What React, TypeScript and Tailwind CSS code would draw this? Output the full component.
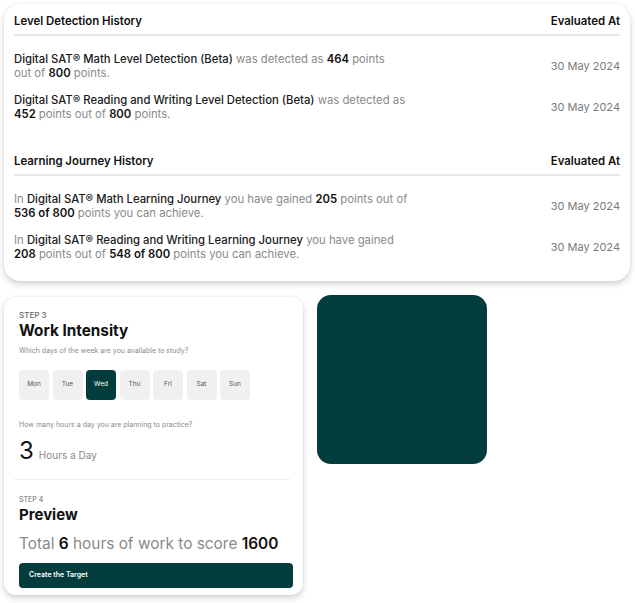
import React from "react";

const B = ({ children }: { children: React.ReactNode }) => (
  <span className="font-medium text-[#1a1a1a]">{children}</span>
);
const N = ({ children }: { children: React.ReactNode }) => (
  <span className="font-semibold text-[#111]">{children}</span>
);

function Row({ l1, l2 }: { l1: React.ReactNode; l2: React.ReactNode }) {
  return (
    <div className="flex items-center justify-between">
      <div className="text-[11.3px] leading-[14px] text-[#8a8a8a]">
        <div className="whitespace-nowrap">{l1}</div>
        <div className="whitespace-nowrap">{l2}</div>
      </div>
      <span className="text-[11px] text-[#7a7a7a]">30 May 2024</span>
    </div>
  );
}

function Section({ title, children }: { title: string; children: React.ReactNode }) {
  return (
    <div>
      <div className="flex items-center justify-between border-b-2 border-[#e8e8e8] pb-[5px] text-[11.4px] leading-[16px] font-semibold text-[#111]">
        <span>{title}</span>
        <span>Evaluated At</span>
      </div>
      <div className="mt-[16px] flex flex-col gap-[13px]">{children}</div>
    </div>
  );
}

export default function App() {
  const days = ["Mon", "Tue", "Wed", "Thu", "Fri", "Sat", "Sun"];
  return (
    <div className="min-h-[603px] bg-white" style={{ fontFamily: "Inter, 'Noto Sans', sans-serif" }}>
      <div className="pt-[4px] pl-[4px]">
        <div className="w-[626px] rounded-[16px] bg-white px-[10px] pt-[9px] pb-[20px] shadow-[0_3px_6px_rgba(0,0,0,0.18),0_0_2px_rgba(0,0,0,0.08)]">
          <Section title="Level Detection History">
            <Row
              l1={<><B>Digital SAT® Math Level Detection (Beta)</B> was detected as <N>464</N> points</>}
              l2={<>out of <N>800</N> points.</>}
            />
            <Row
              l1={<><B>Digital SAT® Reading and Writing Level Detection (Beta)</B> was detected as</>}
              l2={<><N>452</N> points out of <N>800</N> points.</>}
            />
          </Section>
          <div className="mt-[32px]">
            <Section title="Learning Journey History">
              <Row
                l1={<>In <B>Digital SAT® Math Learning Journey</B> you have gained <N>205</N> points out of</>}
                l2={<><N>536 of 800</N> points you can achieve.</>}
              />
              <Row
                l1={<>In <B>Digital SAT® Reading and Writing Learning Journey</B> you have gained</>}
                l2={<><N>208</N> points out of <N>548 of 800</N> points you can achieve.</>}
              />
            </Section>
          </div>
        </div>
      </div>

      <div className="mt-[14px] flex items-start gap-[14px] pl-[4px]">
        <div className="mt-[2px] w-[299px] rounded-[12px] bg-white pl-[15px] pr-[10px] pt-[13px] pb-[7px] shadow-[0_3px_6px_rgba(0,0,0,0.18),0_0_2px_rgba(0,0,0,0.08)]">
          <div className="text-[8px] leading-[10px] font-medium text-[#666]">STEP 3</div>
          <div className="mt-[1px] text-[15.3px] leading-[20px] font-bold text-[#111]">Work Intensity</div>
          <div className="mt-[5px] text-[7px] leading-[9px] text-[#8a8a8a]">Which days of the week are you available to study?</div>
          <div className="mt-[15px] flex gap-[3.5px]">
            {days.map((d) => (
              <div
                key={d}
                className={
                  d === "Wed"
                    ? "flex h-[30px] w-[30px] items-center justify-center rounded-[4px] bg-[#023c3c] text-[6.5px] text-white"
                    : "flex h-[30px] w-[30px] items-center justify-center rounded-[4px] bg-[#f0f0f0] text-[6.5px] text-[#555]"
                }
              >
                {d}
              </div>
            ))}
          </div>
          <div className="mt-[20px] text-[7px] leading-[9px] text-[#8a8a8a]">How many hours a day you are planning to practice?</div>
          <div className="mt-[7px] flex items-baseline gap-[5px]">
            <span className="text-[24px] leading-[30px] text-[#111]">3</span>
            <span className="text-[10px] text-[#8a8a8a]">Hours a Day</span>
          </div>
          <div className="mt-[13px] mr-[3px] -ml-[5px] border-t border-[#eeeeee]"></div>
          <div className="mt-[15px] text-[7px] leading-[9px] text-[#666]">STEP 4</div>
          <div className="mt-[2px] text-[15px] leading-[18px] font-bold text-[#111]">Preview</div>
          <div className="mt-[10px] text-[15.4px] leading-[20px] text-[#8a8a8a]">
            Total <span className="font-semibold text-[#111]">6</span> hours of work to score <span className="font-semibold text-[#111]">1600</span>
          </div>
          <button className="mt-[9px] flex h-[25px] w-full items-center rounded-[4px] bg-[#023c3c] px-[10px] text-[7px] font-semibold text-white">
            Create the Target
          </button>
        </div>
        <div className="h-[169px] w-[170px] rounded-[14px] bg-[#023c3c]"></div>
      </div>
    </div>
  );
}
